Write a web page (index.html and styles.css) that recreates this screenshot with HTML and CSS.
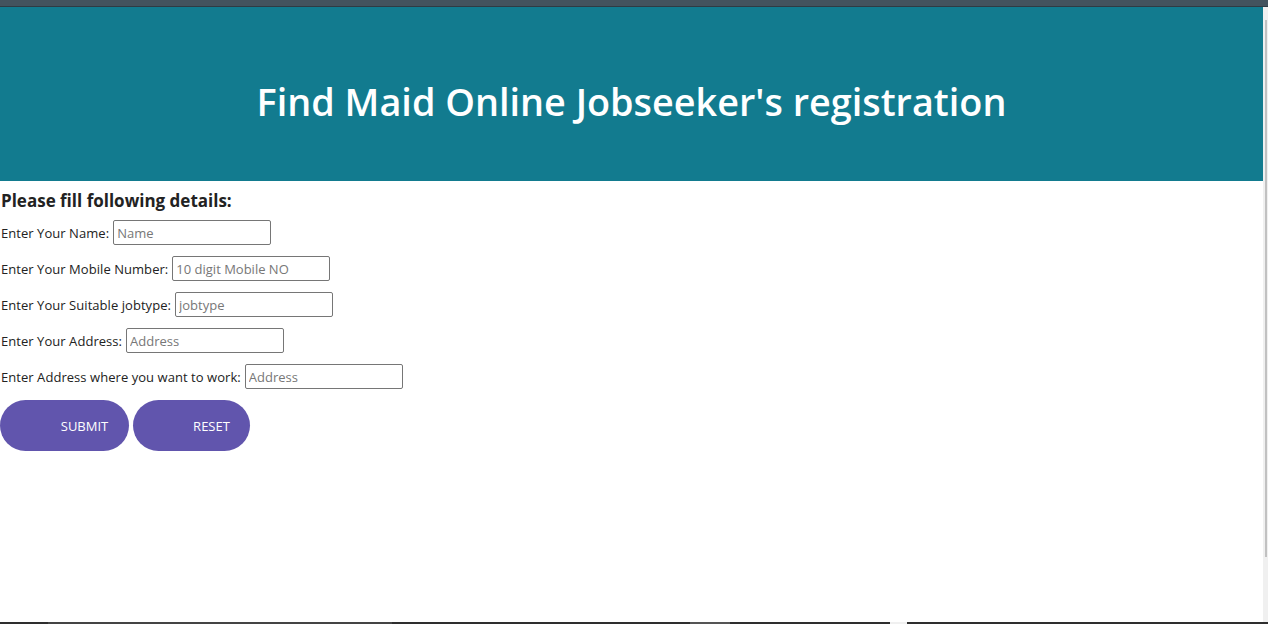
FILE: index.html
```html
<!DOCTYPE html>
<html>
<head>
<meta charset="utf-8">
<link rel="stylesheet" href="styles.css">
</head>
<body>
<div class="topbar"></div>
<div class="frame">
  <div class="page">
    <header class="hero">
      <h1 class="hero-title">Find Maid Online Jobseeker's registration</h1>
    </header>
    <form class="form">
      <h3 class="form-heading">Please fill following details:</h3>
      <div class="row"><label>Enter Your Name:</label><input type="text" placeholder="Name"></div>
      <div class="row"><label>Enter Your Mobile Number:</label><input type="text" placeholder="10 digit Mobile NO"></div>
      <div class="row"><label>Enter Your Suitable jobtype:</label><input type="text" placeholder="jobtype"></div>
      <div class="row"><label>Enter Your Address:</label><input type="text" placeholder="Address"></div>
      <div class="row"><label>Enter Address where you want to work:</label><input type="text" placeholder="Address"></div>
      <div class="actions">
        <button type="button" class="btn btn-submit">SUBMIT</button>
        <button type="reset" class="btn btn-reset">RESET</button>
      </div>
    </form>
  </div>
  <div class="scrollbar"><div class="thumb"></div></div>
</div>
<div class="bottombar">
  <span class="seg seg1"></span><span class="seg seg2"></span><span class="seg seg3"></span><span class="seg seg4"></span><span class="seg seg5"></span><span class="seg seg6"></span><span class="seg seg7"></span>
</div>
</body>
</html>
```
FILE: styles.css
```css
html, body {
  margin: 0;
  padding: 0;
  height: 624px;
  overflow: hidden;
  background: #fff;
  font-family: "Open Sans", "Noto Sans", sans-serif;
}
.topbar {
  height: 6px;
  background: #43535e;
  border-bottom: 1px solid #2f3b44;
}
.frame {
  display: flex;
  height: 615px;
}
.page {
  flex: 1;
  background: #fff;
}
.scrollbar {
  width: 5px;
  background: #f0f0f0;
  padding-top: 13px;
  box-sizing: border-box;
}
.thumb {
  width: 2px;
  margin-left: 2px;
  height: 537px;
  background: #c1c1c1;
}
.hero {
  height: 174px;
  background: #127b8f;
  display: flex;
  align-items: center;
  justify-content: center;
}
.hero-title {
  margin: 0;
  color: #fff;
  font-size: 37.8px;
  font-weight: 600;
  padding-top: 14px;
}
.form {
  padding: 9px 0 0 1px;
  color: #222;
}
.form-heading {
  margin: 0 0 8px 0;
  font-size: 17px;
  font-weight: 700;
  color: #222;
  line-height: 22px;
}
.row {
  display: flex;
  align-items: center;
  height: 25px;
  margin-bottom: 11px;
  font-size: 13px;
  letter-spacing: 0.05px;
}
.row label {
  margin-right: 4px;
}
.row input {
  width: 158px;
  height: 25px;
  box-sizing: border-box;
  border: 1px solid #767676;
  border-radius: 2px;
  padding: 1px 3px;
  font-family: inherit;
  font-size: 13px;
  color: #222;
  background: #fff;
  margin: 0;
}
.row input::placeholder {
  color: #777;
}
.actions {
  display: flex;
  gap: 4px;
  margin-left: -1px;
}
.btn {
  height: 51px;
  border: 0;
  border-radius: 26px;
  background: #6155ad;
  color: #fff;
  font-family: inherit;
  font-size: 13px;
  padding: 0 20px 0 60px;
  cursor: pointer;
}
.btn-submit { width: 129px; }
.btn-reset { width: 117px; }
.bottombar {
  height: 2px;
  display: flex;
  background: #2e2e2e;
}
.seg { display: block; height: 2px; }
.seg1 { width: 48px; background: #2e2e2e; }
.seg2 { width: 344px; background: #444; }
.seg3 { width: 298px; background: #2e2e2e; }
.seg4 { width: 40px; background: #555; }
.seg5 { width: 160px; background: #2e2e2e; }
.seg6 { width: 17px; background: #f0f0f0; }
.seg7 { flex: 1; background: #2e2e2e; }
```
